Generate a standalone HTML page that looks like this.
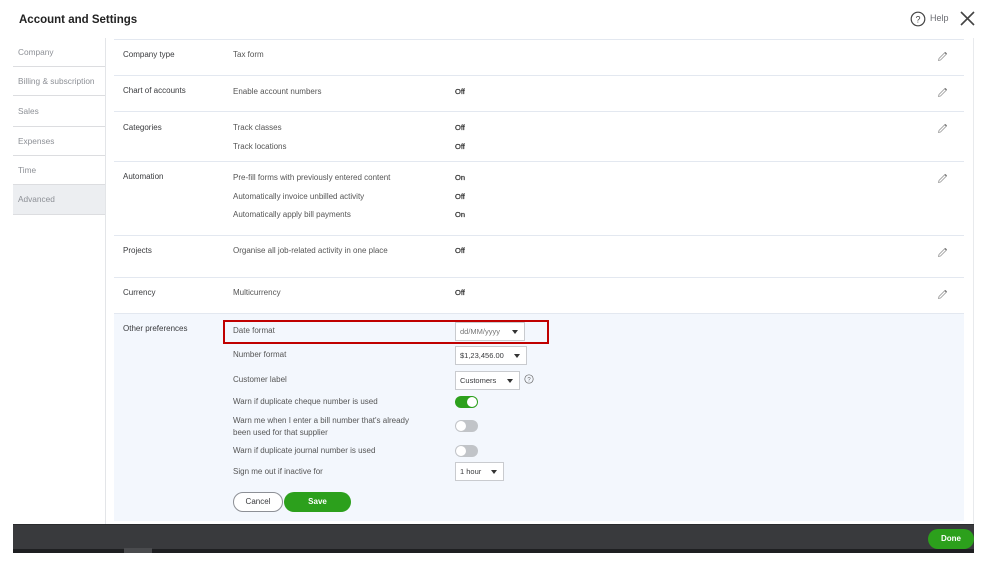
<!DOCTYPE html>
<html><head><meta charset="utf-8"><style>
*{margin:0;padding:0;box-sizing:border-box}
body{width:999px;height:562px;background:#fff;font-family:"Liberation Sans",sans-serif;position:relative;overflow:hidden;color:#393a3d}
.a{position:absolute;white-space:nowrap}
.t{font-size:8px;color:#555}
.h{font-size:8px;color:#393a3d}
.v{font-size:7.5px;color:#333;font-weight:normal;-webkit-text-stroke:0.25px #333}
.side{position:absolute;left:13px;width:92px;height:29px;border-bottom:1px solid #dcdde0;font-size:8.3px;color:#8d9096;padding:9px 0 0 5px}
.hl{position:absolute;left:114px;width:850px;height:1px;background:#e3e8f0}
.pen{position:absolute;left:937px;width:11px;height:11px}
.sel{position:absolute;height:19px;border:1px solid #c9cbcf;background:#fff;font-size:7.5px;color:#393a3d;padding:4px 0 0 4px}
.sel:after{content:"";position:absolute;right:6px;top:7px;border-left:3px solid transparent;border-right:3px solid transparent;border-top:4px solid #333}
.tg{position:absolute;left:455px;width:23px;height:12px;border-radius:6px;background:#c1c4c8}
.tg i{position:absolute;left:1px;top:1px;width:10px;height:10px;border-radius:50%;background:#fff}
</style></head><body>
<div class="a" style="left:19px;top:14px;font-size:11.5px;font-weight:bold;color:#222">Account and Settings</div>
<svg class="a" style="left:910px;top:11px" width="16" height="16" viewBox="0 0 16 16"><circle cx="8" cy="8" r="6.8" fill="none" stroke="#444" stroke-width="1.2"/><text x="8" y="11.3" font-size="9" text-anchor="middle" fill="#444" font-family="Liberation Sans">?</text></svg>
<div class="a" style="left:930px;top:13px;font-size:9px;color:#6b6c72">Help</div>
<svg class="a" style="left:960px;top:11px" width="15" height="15" viewBox="0 0 15 15"><path d="M1 1L14 14M14 1L1 14" stroke="#444" stroke-width="1.6"/></svg>

<div style="position:absolute;left:105px;top:38px;width:1px;height:486px;background:#e3e5e8"></div>
<div style="position:absolute;left:973px;top:38px;width:1px;height:486px;background:#e8eaed"></div>

<div class="side" style="top:38px">Company</div>
<div class="side" style="top:67px">Billing &amp; subscription</div>
<div class="side" style="top:97px;height:30px">Sales</div>
<div class="side" style="top:127px">Expenses</div>
<div class="side" style="top:156px">Time</div>
<div class="side" style="top:185px;background:#eceef1;height:30px">Advanced</div>

<div class="hl" style="top:39px"></div>
<div class="hl" style="top:75px"></div>
<div class="hl" style="top:111px"></div>
<div class="hl" style="top:161px"></div>
<div class="hl" style="top:235px"></div>
<div class="hl" style="top:277px"></div>
<div class="hl" style="top:313px"></div>
<div style="position:absolute;left:114px;top:314px;width:850px;height:207px;background:#f3f7fd"></div>

<div class="a h" style="left:123px;top:50px">Company type</div>
<div class="a t" style="left:233px;top:50px">Tax form</div>
<div class="a h" style="left:123px;top:86px">Chart of accounts</div>
<div class="a t" style="left:233px;top:87px">Enable account numbers</div>
<div class="a v" style="left:455px;top:87px">Off</div>
<div class="a h" style="left:123px;top:123px">Categories</div>
<div class="a t" style="left:233px;top:123px">Track classes</div>
<div class="a v" style="left:455px;top:123px">Off</div>
<div class="a t" style="left:233px;top:142px">Track locations</div>
<div class="a v" style="left:455px;top:142px">Off</div>
<div class="a h" style="left:123px;top:172px">Automation</div>
<div class="a t" style="left:233px;top:173px">Pre-fill forms with previously entered content</div>
<div class="a v" style="left:455px;top:173px">On</div>
<div class="a t" style="left:233px;top:192px">Automatically invoice unbilled activity</div>
<div class="a v" style="left:455px;top:192px">Off</div>
<div class="a t" style="left:233px;top:210px">Automatically apply bill payments</div>
<div class="a v" style="left:455px;top:210px">On</div>
<div class="a h" style="left:123px;top:246px">Projects</div>
<div class="a t" style="left:233px;top:246px">Organise all job-related activity in one place</div>
<div class="a v" style="left:455px;top:246px">Off</div>
<div class="a h" style="left:123px;top:288px">Currency</div>
<div class="a t" style="left:233px;top:288px">Multicurrency</div>
<div class="a v" style="left:455px;top:288px">Off</div>

<svg class="pen" style="top:51px" viewBox="0 0 11 11"><path d="M1.5 9.5L2 7.5L8 1.5L9.5 3L3.5 9Z" fill="none" stroke="#999" stroke-width="0.8"/><path d="M8 1.5L9.5 3" stroke="#777" stroke-width="1.4"/></svg>
<svg class="pen" style="top:87px" viewBox="0 0 11 11"><path d="M1.5 9.5L2 7.5L8 1.5L9.5 3L3.5 9Z" fill="none" stroke="#999" stroke-width="0.8"/><path d="M8 1.5L9.5 3" stroke="#777" stroke-width="1.4"/></svg>
<svg class="pen" style="top:123px" viewBox="0 0 11 11"><path d="M1.5 9.5L2 7.5L8 1.5L9.5 3L3.5 9Z" fill="none" stroke="#999" stroke-width="0.8"/><path d="M8 1.5L9.5 3" stroke="#777" stroke-width="1.4"/></svg>
<svg class="pen" style="top:173px" viewBox="0 0 11 11"><path d="M1.5 9.5L2 7.5L8 1.5L9.5 3L3.5 9Z" fill="none" stroke="#999" stroke-width="0.8"/><path d="M8 1.5L9.5 3" stroke="#777" stroke-width="1.4"/></svg>
<svg class="pen" style="top:247px" viewBox="0 0 11 11"><path d="M1.5 9.5L2 7.5L8 1.5L9.5 3L3.5 9Z" fill="none" stroke="#999" stroke-width="0.8"/><path d="M8 1.5L9.5 3" stroke="#777" stroke-width="1.4"/></svg>
<svg class="pen" style="top:289px" viewBox="0 0 11 11"><path d="M1.5 9.5L2 7.5L8 1.5L9.5 3L3.5 9Z" fill="none" stroke="#999" stroke-width="0.8"/><path d="M8 1.5L9.5 3" stroke="#777" stroke-width="1.4"/></svg>

<div class="a h" style="left:123px;top:324px">Other preferences</div>
<div style="position:absolute;left:223px;top:320px;width:326px;height:24px;border:2px solid #c00000"></div>
<div class="a t" style="left:233px;top:326px">Date format</div>
<div class="sel" style="left:455px;top:322px;width:70px;color:#777">dd/MM/yyyy</div>
<div class="a t" style="left:233px;top:350px">Number format</div>
<div class="sel" style="left:455px;top:346px;width:72px">$1,23,456.00</div>
<div class="a t" style="left:233px;top:375px">Customer label</div>
<div class="sel" style="left:455px;top:371px;width:65px">Customers</div>
<svg class="a" style="left:524px;top:374px" width="10" height="10" viewBox="0 0 10 10"><circle cx="5" cy="5" r="4.2" fill="none" stroke="#666" stroke-width="0.7"/><text x="5" y="7.3" font-size="6" text-anchor="middle" fill="#666" font-family="Liberation Sans">?</text></svg>
<div class="a t" style="left:233px;top:397px">Warn if duplicate cheque number is used</div>
<div class="tg" style="top:396px;background:#2ca01c"><i style="left:12px"></i></div>
<div class="a t" style="left:233px;top:415px;line-height:12px">Warn me when I enter a bill number that's already<br>been used for that supplier</div>
<div class="tg" style="top:420px"><i></i></div>
<div class="a t" style="left:233px;top:446px">Warn if duplicate journal number is used</div>
<div class="tg" style="top:445px"><i></i></div>
<div class="a t" style="left:233px;top:467px">Sign me out if inactive for</div>
<div class="sel" style="left:455px;top:462px;width:49px">1 hour</div>
<div class="a" style="left:233px;top:492px;width:50px;height:20px;border:1px solid #8d9096;border-radius:10px;background:#fff;font-size:8px;color:#393a3d;text-align:center;line-height:18px">Cancel</div>
<div class="a" style="left:284px;top:492px;width:67px;height:20px;border-radius:10px;background:#2ca01c;font-size:8px;font-weight:bold;color:#fff;text-align:center;line-height:20px">Save</div>

<div style="position:absolute;left:13px;top:524px;width:961px;height:25px;background:#393a3d;border-top:1px solid #2a2b2d"></div>
<div style="position:absolute;left:13px;top:549px;width:961px;height:4px;background:#1e1f21"></div>
<div style="position:absolute;left:124px;top:548px;width:28px;height:5px;background:#4a4b4e"></div>
<div class="a" style="left:928px;top:529px;width:46px;height:20px;border-radius:10px;background:#2ca01c;font-size:8px;font-weight:bold;color:#fff;text-align:center;line-height:20px">Done</div>
</body></html>
